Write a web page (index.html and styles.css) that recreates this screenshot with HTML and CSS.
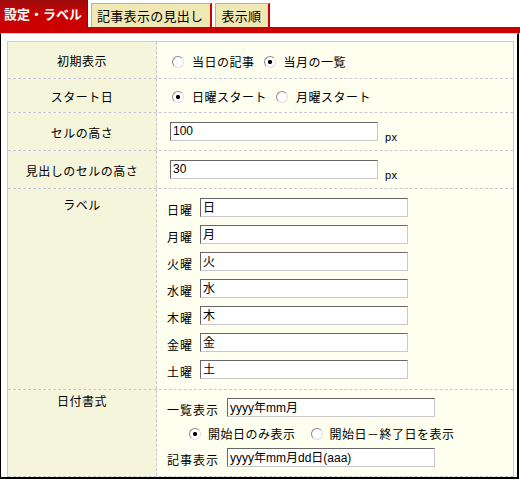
FILE: index.html
```html
<!DOCTYPE html>
<html lang="ja">
<head>
<meta charset="utf-8">
<title>設定・ラベル</title>
<link rel="stylesheet" href="styles.css">
</head>
<body>
<div class="tabs">
  <div class="tab active">設定・ラベル</div>
  <div class="tab">記事表示の見出し</div>
  <div class="tab">表示順</div>
</div>
<div class="bar"></div>
<div class="frame">
  <div class="table">
    <div class="row r1">
      <div class="lab">初期表示</div>
      <div class="val opts">
        <label class="opt"><input type="radio" name="init">当日の記事</label>
        <label class="opt"><input type="radio" name="init" checked>当月の一覧</label>
      </div>
    </div>
    <div class="row r2">
      <div class="lab">スタート日</div>
      <div class="val opts">
        <label class="opt"><input type="radio" name="start" checked>日曜スタート</label>
        <label class="opt"><input type="radio" name="start">月曜スタート</label>
      </div>
    </div>
    <div class="row r3">
      <div class="lab">セルの高さ</div>
      <div class="val sz">
        <input class="txt" type="text" value="100">
        <span class="px">px</span>
      </div>
    </div>
    <div class="row r4">
      <div class="lab">見出しのセルの高さ</div>
      <div class="val sz">
        <input class="txt" type="text" value="30">
        <span class="px">px</span>
      </div>
    </div>
    <div class="row r5">
      <div class="lab top t5">ラベル</div>
      <div class="val days">
        <div class="day"><span class="dl">日曜</span><input class="txt" type="text" value="日"></div>
        <div class="day"><span class="dl">月曜</span><input class="txt" type="text" value="月"></div>
        <div class="day"><span class="dl">火曜</span><input class="txt" type="text" value="火"></div>
        <div class="day"><span class="dl">水曜</span><input class="txt" type="text" value="水"></div>
        <div class="day"><span class="dl">木曜</span><input class="txt" type="text" value="木"></div>
        <div class="day"><span class="dl">金曜</span><input class="txt" type="text" value="金"></div>
        <div class="day"><span class="dl">土曜</span><input class="txt" type="text" value="土"></div>
      </div>
    </div>
    <div class="row r6">
      <div class="lab top t6">日付書式</div>
      <div class="val fmt">
        <div class="day"><span class="fl">一覧表示</span><input class="txt" type="text" value="yyyy年mm月"></div>
        <div class="fopts">
          <label class="opt"><input type="radio" name="fmt" checked>開始日のみ表示</label>
          <label class="opt"><input type="radio" name="fmt">開始日－終了日を表示</label>
        </div>
        <div class="day"><span class="fl">記事表示</span><input class="txt" type="text" value="yyyy年mm月dd日(aaa)"></div>
      </div>
    </div>
  </div>
</div>
</body>
</html>
```
FILE: styles.css
```css
body {
  margin: 0;
  font-family: "Noto Sans CJK JP", sans-serif;
  font-size: 12px;
  color: #000;
  background: #fff;
}

.tabs {
  display: flex;
  align-items: flex-end;
  gap: 3px;
  height: 27px;
}

.tab {
  height: 24px;
  box-sizing: border-box;
  display: flex;
  align-items: center;
  padding: 0 7px 0 5px;
  font-size: 13px;
  line-height: 1;
  letter-spacing: 0.3px;
  background: #f0e8b4;
  border-top: 1px solid #e8b800;
  border-left: 1px solid #e8b800;
  border-right: 2px solid #cc0000;
}

.tab.active {
  height: 27px;
  width: 88px;
  padding: 0 0 0 4px;
  letter-spacing: 0;
  color: #fff;
  font-weight: bold;
  background: linear-gradient(#9c0c0c, #c40202 45%, #cc0000);
  border: none;
  border-right: 1px solid #a00000;
}

.bar {
  height: 6px;
  background: #cc0000;
}

.frame {
  width: 519px;
  box-sizing: border-box;
  border-style: solid;
  border-color: #d4d4d4 #000 #000 #000;
  border-width: 1px 2px 2px 1px;
  padding: 7px 3px 0 6px;
}

.table {
  border: 1px solid #cccccc;
  border-bottom: none;
}

.row {
  display: grid;
  grid-template-columns: 149px 1fr;
  border-bottom: 1px dashed #c8c8c8;
}

.r1 { height: 36px; }
.r2 { height: 33px; }
.r3 { height: 37px; }
.r4 { height: 37px; }
.r5 { height: 200px; }
.r6 { height: 86px; }

.lab {
  background: #f5f5dc;
  border-right: 1px dashed #c8c8c8;
  display: flex;
  align-items: center;
  justify-content: center;
  letter-spacing: 0.5px;
  line-height: 16px;
  padding-top: 2px;
  box-sizing: border-box;
}

.lab.top { align-items: flex-start; }
.t5 { padding-top: 8px; }
.t6 { padding-top: 3px; }

.val {
  background: #fffff0;
  display: flex;
  align-items: center;
  letter-spacing: 0.5px;
}

.opts {
  padding-left: 15px;
  padding-top: 3px;
  box-sizing: border-box;
}

.opt {
  display: inline-flex;
  align-items: center;
  margin-right: 9px;
  line-height: 16px;
}

input[type="radio"] {
  appearance: none;
  -webkit-appearance: none;
  width: 12px;
  height: 12px;
  margin: 0 8px 0 0;
  box-sizing: border-box;
  border: 1px solid;
  border-color: #8a8a8a #dedede #dedede #8a8a8a;
  border-radius: 50%;
  background: #fff;
}

input[type="radio"]:checked {
  background: radial-gradient(circle, #000 0 1.8px, #fff 2.4px);
}

.txt {
  width: 208px;
  height: 19px;
  box-sizing: border-box;
  margin: 0;
  padding: 0 2px 2px;
  border: 1px solid;
  border-color: #666 #c8c8c8 #c8c8c8 #666;
  background: #fff;
  font-family: "Liberation Sans", "Noto Sans CJK JP", sans-serif;
  font-size: 12px;
  color: #000;
  outline: none;
}

.sz {
  padding-left: 13px;
}

.px {
  margin-left: 7px;
  margin-top: 12px;
  font-family: "Liberation Sans", sans-serif;
  font-size: 11px;
  line-height: 11px;
}

.days {
  flex-direction: column;
  align-items: flex-start;
  padding: 9px 0 0 10px;
  gap: 8px;
  box-sizing: border-box;
}

.day {
  display: flex;
  align-items: flex-end;
}

.dl {
  width: 33px;
  line-height: 14px;
  letter-spacing: 1px;
}

.fmt {
  flex-direction: column;
  align-items: flex-start;
  padding: 8px 0 0 10px;
  box-sizing: border-box;
}

.fl {
  width: 60px;
  line-height: 14px;
  letter-spacing: 1px;
}

.fopts {
  display: flex;
  align-items: center;
  height: 16px;
  margin: 9px 0 6px 22px;
}

.fopts input[type="radio"] {
  margin-right: 7px;
}

.fopts .opt {
  margin-right: 15px;
}
```
